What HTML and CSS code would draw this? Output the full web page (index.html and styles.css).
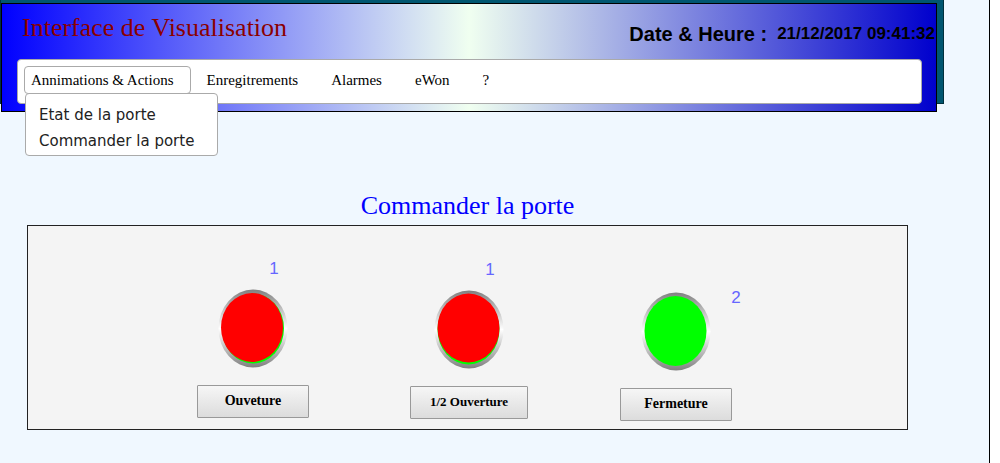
FILE: index.html
```html
<!DOCTYPE html>
<html lang="fr">
<head>
    <meta charset="UTF-8">
    <meta name="viewport" content="width=device-width, initial-scale=1.0">
    <title>Interface de Visualisation</title>
    <link rel="stylesheet" href="styles.css">
</head>
<body>

<div class="screen">

    <!-- Bandeau -->
    <div class="banner">
        <header class="header">
            <div class="header-top">
                <h1 class="title">Interface de Visualisation</h1>
                <div class="clock">
                    <span class="clock-label">Date &amp; Heure :</span>
                    <time class="clock-value" datetime="2017-12-21T09:41:32">21/12/2017 09:41:32</time>
                </div>
            </div>

            <nav>
                <ul class="menu">
                    <li class="menu-item">
                        <a class="menu-link active" href="#">Annimations &amp; Actions</a>
                        <ul class="submenu">
                            <li><a href="#">Etat de la porte</a></li>
                            <li><a href="#">Commander la porte</a></li>
                        </ul>
                    </li>
                    <li class="menu-item"><a class="menu-link" href="#">Enregitrements</a></li>
                    <li class="menu-item"><a class="menu-link" href="#">Alarmes</a></li>
                    <li class="menu-item"><a class="menu-link" href="#">eWon</a></li>
                    <li class="menu-item"><a class="menu-link" href="#">?</a></li>
                </ul>
            </nav>
        </header>
    </div>

    <!-- Commandes de la porte -->
    <main class="content">
        <h2 class="subtitle">Commander la porte</h2>
        <div class="panel">
            <div class="station">
                <span class="counter">1</span>
                <svg class="lamp" viewBox="0 0 70 79">
                    <defs>
                        <linearGradient id="ring" x1="0" y1="0" x2="0" y2="1">
                            <stop offset="0" stop-color="#808080"/>
                            <stop offset="0.5" stop-color="#ffffff"/>
                            <stop offset="1" stop-color="#808080"/>
                        </linearGradient>
                    </defs>
                    <ellipse cx="35" cy="39.5" rx="34.5" ry="39" fill="url(#ring)"/>
                    <ellipse cx="35" cy="39.5" rx="31" ry="35" fill="#00ff00"/>
                    <ellipse cx="34" cy="38.5" rx="31" ry="34.5" fill="#ff0000"/>
                </svg>
                <button class="command" type="button">Ouveture</button>
            </div>

            <div class="station lower">
                <span class="counter">1</span>
                <svg class="lamp" viewBox="0 0 70 79">
                    <ellipse cx="35" cy="39.5" rx="34.5" ry="39" fill="url(#ring)"/>
                    <ellipse cx="34.5" cy="39.5" rx="31" ry="35" fill="#00ff00"/>
                    <ellipse cx="34.5" cy="38" rx="31" ry="34.5" fill="#ff0000"/>
                </svg>
                <button class="command small" type="button">1/2 Ouverture</button>
            </div>

            <div class="station side">
                <span class="counter">2</span>
                <svg class="lamp" viewBox="0 0 70 79">
                    <ellipse cx="35" cy="39.5" rx="34.5" ry="39" fill="url(#ring)"/>
                    <ellipse cx="34.5" cy="39" rx="31" ry="35" fill="#00ff00"/>
                </svg>
                <button class="command" type="button">Fermeture</button>
            </div>
        </div>
    </main>

</div>

</body>
</html>
```

FILE: styles.css
```css
body {
    margin: 0;
    background-color: #fff;
    color: #000;
    font-family: "Liberation Serif", "Times New Roman", serif;
}

h1, h2, ul {
    margin: 0;
    padding: 0;
    font-weight: normal;
}

ul {
    list-style: none;
}

a {
    color: inherit;
    text-decoration: none;
}

.screen {
    box-sizing: border-box;
    min-height: 100vh;
    margin-right: 10px;
    border-right: 1px solid #000;
    background-color: aliceblue;
}

/* Bandeau */
.banner {
    position: relative;
    margin-right: 45px;
    padding: 3px 7px 0 1px;
}

.banner::before {
    content: "";
    position: absolute;
    inset: 0 0 8px 0;
    box-sizing: border-box;
    border: 1px solid #00303c;
    border-top: none;
    background-color: #005670;
}

.header {
    position: relative;
    padding-bottom: 7px;
    border: 1px solid #000;
    background: linear-gradient(to right, #0000ff, #f0fff0 50%, #0000cd);
}

.header-top {
    display: flex;
    justify-content: space-between;
    min-height: 55px;
    padding: 0 1px 0 20px;
    line-height: 48px;
}

.title {
    color: #8b0000;
    font-size: 26px;
}

.clock {
    display: flex;
    gap: 10px;
    padding-top: 6px;
    font-family: "Liberation Sans", Arial, sans-serif;
    font-weight: bold;
}

.clock-label {
    font-size: 20px;
}

.clock-value {
    font-size: 17px;
}

/* Menu */
.menu {
    display: flex;
    gap: 9px;
    margin: 0 14px 0 15px;
    padding: 6px 6px 9px;
    border: 1px solid #aaa;
    border-radius: 4px;
    background-color: #fff;
    font-size: 15px;
}

.menu-item {
    position: relative;
}

.menu-link {
    display: block;
    padding: 0 16px 0 6px;
    border: 1px solid transparent;
    border-radius: 4px;
    line-height: 26px;
}

.menu-link.active {
    border-color: #aaa;
}

.submenu {
    position: absolute;
    top: 27px;
    left: 1px;
    padding: 8px 23px 1px 13px;
    border: 1px solid #aaa;
    border-radius: 4px;
    background-color: #fff;
    color: #222;
    font-family: "DejaVu Sans", Verdana, sans-serif;
    line-height: 26px;
    white-space: nowrap;
}

/* Commandes */
.content {
    margin: 75px 81px 0 27px;
}

.subtitle {
    color: #0000ff;
    font-size: 26px;
    line-height: 38px;
    text-align: center;
}

.panel {
    display: grid;
    grid-template-columns: 216fr 216fr 198fr;
    padding: 0 132px 8px 117px;
    border: 1px solid #222;
    background-color: #f4f4f4;
}

.station {
    display: grid;
    align-content: start;
    justify-items: center;
    padding-top: 33px;
}

.station.lower {
    padding-top: 34px;
}

.station.side {
    padding-top: 62px;
}

.counter {
    padding-left: 42px;
    color: #6666ff;
    font-family: "Liberation Sans", Arial, sans-serif;
    font-size: 17px;
    line-height: 20px;
}

.lamp {
    display: block;
    width: 70px;
    height: 79px;
    margin: 10px 0 17px;
}

/* Compteur a droite du voyant */
.side .counter,
.side .lamp {
    grid-area: 1 / 1;
}

.side .counter {
    padding-left: 120px;
}

.side .lamp {
    margin-top: 4px;
}

.command {
    box-sizing: border-box;
    min-width: 112px;
    height: 33px;
    padding: 0 19px 2px;
    border: 1px solid #999;
    border-radius: 1px;
    background: linear-gradient(#f6f6f6, #dcdcdc);
    color: #000;
    font: bold 14px "Liberation Serif", "Times New Roman", serif;
    cursor: pointer;
}

.command.small {
    font-size: 13px;
}
```
